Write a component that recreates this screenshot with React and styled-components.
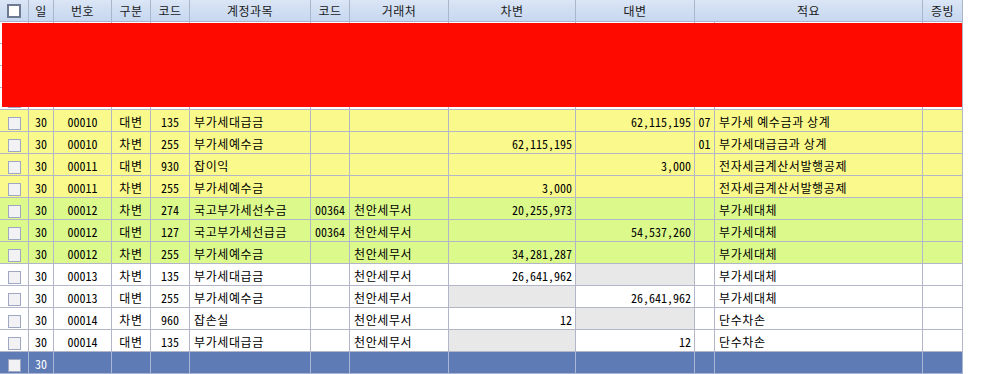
import React from "react";
import styled, { createGlobalStyle } from "styled-components";

const Global = createGlobalStyle`
  html, body { margin: 0; padding: 0; background: #ffffff; }
  body { font-family: "Noto Sans CJK KR", "Noto Sans", sans-serif; font-size: 12px; color: #000; }
`;

const COLS = "29px 25px 58px 39px 39px 121px 39px 99px 127px 119px 20px 208px 40px";

const Wrap = styled.div`
  position: relative;
  width: 963px;
`;

const HeaderRow = styled.div`
  display: grid;
  grid-template-columns: 29px 25px 58px 39px 39px 121px 39px 99px 127px 119px 228px 40px;
  height: 22px;
  box-sizing: border-box;
  border-bottom: 1px solid #a9b5cc;
  background: linear-gradient(#dbe6f6, #c6d7ef);
`;

const HeadCell = styled.div`
  display: flex;
  align-items: center;
  justify-content: center;
  border-right: 1px solid #aab6cc;
  font-size: 12px;
  color: #1a1a1a;
  letter-spacing: 0.5px;
  overflow: hidden;
  white-space: nowrap;
`;

const Row = styled.div`
  display: grid;
  grid-template-columns: ${COLS};
  height: 22px;
  box-sizing: border-box;
  border-bottom: 1px solid ${(p) => (p.$sel ? "#a8b6d4" : "#b2b6c8")};
  background: ${(p) => p.$bg};
  color: ${(p) => (p.$sel ? "#ffffff" : "#000")};
`;

const Cell = styled.div`
  display: flex;
  align-items: center;
  justify-content: ${(p) =>
    p.$align === "left" ? "flex-start" : p.$align === "right" ? "flex-end" : "center"};
  padding: ${(p) => (p.$align === "left" ? "1px 0 0 4px" : p.$align === "right" ? "1px 3px 0 0" : "1px 0 0 0")};
  box-sizing: border-box;
  border-right: 1px solid ${(p) => (p.$sel ? "#a8b6d4" : "#b2b6c8")};
  background: ${(p) => p.$bg || "transparent"};
  white-space: nowrap;
  overflow: hidden;
  font-family: ${(p) =>
    p.$num ? '"Noto Sans Mono CJK KR", "Noto Sans CJK KR", monospace' : '"Noto Sans CJK KR", sans-serif'};
  letter-spacing: ${(p) => (p.$num ? "0" : "0.6px")};
`;

const Check = styled.span`
  display: block;
  width: 13px;
  height: 13px;
  box-sizing: border-box;
  margin-top: 4px;
  border: 1px solid #9ea8c2;
  background: #f2f2f4;
`;

const HeadCheck = styled.span`
  display: block;
  width: 14px;
  height: 14px;
  box-sizing: border-box;
  border: 2px solid #6f7b92;
  background: #ffffff;
`;

const Redact = styled.div`
  position: absolute;
  left: 2px;
  top: 23px;
  width: 960px;
  height: 84px;
  background: #fe0a00;
`;

const YELLOW = "#fafa8c";
const GREEN = "#dcfa8c";
const WHITE = "#ffffff";
const GRAY = "#e8e8e8";
const SEL = "#5e7bb6";

const rows = [
  { bg: YELLOW, d: "30", no: "00010", t: "대변", c: "135", acct: "부가세대급금", cc: "", cust: "", dr: "", cr: "62,115,195", k: "07", memo: "부가세 예수금과 상계" },
  { bg: YELLOW, d: "30", no: "00010", t: "차변", c: "255", acct: "부가세예수금", cc: "", cust: "", dr: "62,115,195", cr: "", k: "01", memo: "부가세대급금과 상계" },
  { bg: YELLOW, d: "30", no: "00011", t: "대변", c: "930", acct: "잡이익", cc: "", cust: "", dr: "", cr: "3,000", k: "", memo: "전자세금계산서발행공제" },
  { bg: YELLOW, d: "30", no: "00011", t: "차변", c: "255", acct: "부가세예수금", cc: "", cust: "", dr: "3,000", cr: "", k: "", memo: "전자세금계산서발행공제" },
  { bg: GREEN, d: "30", no: "00012", t: "차변", c: "274", acct: "국고부가세선수금", cc: "00364", cust: "천안세무서", dr: "20,255,973", cr: "", k: "", memo: "부가세대체" },
  { bg: GREEN, d: "30", no: "00012", t: "대변", c: "127", acct: "국고부가세선급금", cc: "00364", cust: "천안세무서", dr: "", cr: "54,537,260", k: "", memo: "부가세대체" },
  { bg: GREEN, d: "30", no: "00012", t: "차변", c: "255", acct: "부가세예수금", cc: "", cust: "천안세무서", dr: "34,281,287", cr: "", k: "", memo: "부가세대체" },
  { bg: WHITE, d: "30", no: "00013", t: "차변", c: "135", acct: "부가세대급금", cc: "", cust: "천안세무서", dr: "26,641,962", cr: "", crGray: true, k: "", memo: "부가세대체" },
  { bg: WHITE, d: "30", no: "00013", t: "대변", c: "255", acct: "부가세예수금", cc: "", cust: "천안세무서", dr: "", drGray: true, cr: "26,641,962", k: "", memo: "부가세대체" },
  { bg: WHITE, d: "30", no: "00014", t: "차변", c: "960", acct: "잡손실", cc: "", cust: "천안세무서", dr: "12", cr: "", crGray: true, k: "", memo: "단수차손" },
  { bg: WHITE, d: "30", no: "00014", t: "대변", c: "135", acct: "부가세대급금", cc: "", cust: "천안세무서", dr: "", drGray: true, cr: "12", k: "", memo: "단수차손" },
];

const headers = ["", "일", "번호", "구분", "코드", "계정과목", "코드", "거래처", "차변", "대변", "적요", "증빙"];

function DataRow({ r, sel }) {
  return (
    <Row $bg={r.bg} $sel={sel}>
      <Cell $sel={sel}><Check /></Cell>
      <Cell $sel={sel} $num>{r.d}</Cell>
      <Cell $sel={sel} $num>{r.no}</Cell>
      <Cell $sel={sel}>{r.t}</Cell>
      <Cell $sel={sel} $num>{r.c}</Cell>
      <Cell $sel={sel} $align="left">{r.acct}</Cell>
      <Cell $sel={sel} $num>{r.cc}</Cell>
      <Cell $sel={sel} $align="left">{r.cust}</Cell>
      <Cell $sel={sel} $align="right" $num $bg={r.drGray ? GRAY : undefined}>{r.dr}</Cell>
      <Cell $sel={sel} $align="right" $num $bg={r.crGray ? GRAY : undefined}>{r.cr}</Cell>
      <Cell $sel={sel} $num>{r.k}</Cell>
      <Cell $sel={sel} $align="left">{r.memo}</Cell>
      <Cell $sel={sel}></Cell>
    </Row>
  );
}

const blank = { bg: WHITE, d: "", no: "", t: "", c: "", acct: "", cc: "", cust: "", dr: "", cr: "", k: "", memo: "" };

export default function App() {
  return (
    <>
      <Global />
      <Wrap>
        <HeaderRow>
          {headers.map((h, i) => (
            <HeadCell key={i}>{i === 0 ? <HeadCheck /> : h}</HeadCell>
          ))}
        </HeaderRow>
        {[0, 1, 2, 3].map((i) => (
          <DataRow key={"b" + i} r={blank} />
        ))}
        {rows.map((r, i) => (
          <DataRow key={i} r={r} />
        ))}
        <DataRow r={{ ...blank, bg: SEL, d: "30" }} sel />
        <Redact />
      </Wrap>
    </>
  );
}
